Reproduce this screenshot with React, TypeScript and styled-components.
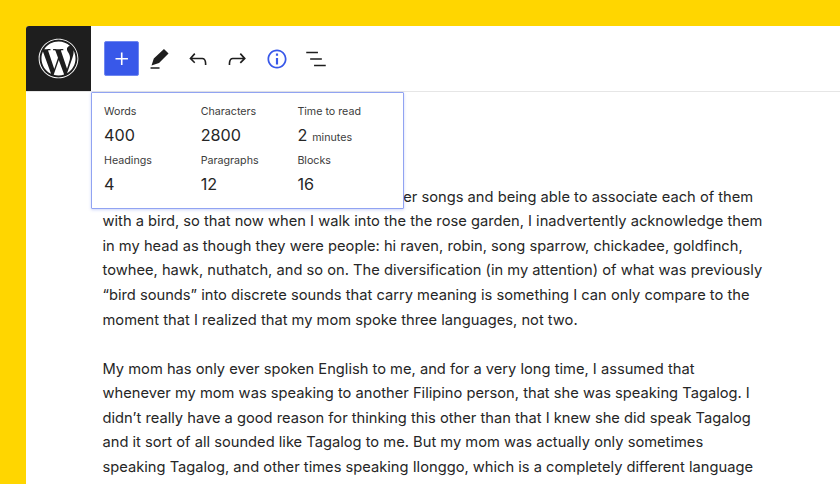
import React from "react";
import styled, { createGlobalStyle } from "styled-components";
import { FaWordpress } from "react-icons/fa";

const Global = createGlobalStyle`
  html, body { margin: 0; padding: 0; }
  body { font-family: Inter, "Noto Sans", sans-serif; background: #ffd600; }
`;
const Page = styled.div`
  width: 840px; height: 484px; box-sizing: border-box; overflow: hidden;
  background: #ffd600; padding: 26px 0 0 26px;
`;
const Editor = styled.div`
  position: relative; height: 458px; background: #fff; border-top-left-radius: 3px; overflow: hidden;
`;
const Toolbar = styled.header`
  display: flex; align-items: center; height: 66px; box-sizing: border-box;
  border-bottom: 1px solid #e6e6e6;
`;
const Logo = styled.div`
  width: 65px; height: 65px; background: #1e1e1e; color: #fff;
  display: flex; align-items: center; justify-content: center; margin-right: 13px;
`;
const AddButton = styled.button`
  width: 35px; height: 35px; padding: 0; border: 1px solid #6f87f0; border-radius: 2px;
  background: #3858e9; color: #fff; display: flex; align-items: center; justify-content: center;
`;
const IconButton = styled.button<{ $active?: boolean }>`
  width: 39.3px; height: 35px; padding: 0; border: 0; background: none;
  color: ${(p) => (p.$active ? "#3858e9" : "#1e1e1e")};
  display: flex; align-items: center; justify-content: center;
`;
const Icon = styled.svg`
  width: 26px; height: 26px; fill: currentColor; display: block;
`;
const Popover = styled.section`
  position: absolute; left: 65px; top: 66px; width: 313px; height: 117px; box-sizing: border-box;
  background: #fff; border: 1px solid #91a3f2; border-radius: 1px;
  box-shadow: 0 1px 3px rgba(56, 88, 233, 0.25);
  padding: 12px 0 0 12px;
  display: grid; grid-template-columns: 96.7px 96.7px 96.7px; grid-auto-rows: 49px;
`;
const Stat = styled.div`
  display: flex; flex-direction: column; color: #1e1e1e;
`;
const Label = styled.div`
  font-size: 10.7px; line-height: 14px; color: #3c3c3c;
`;
const Value = styled.div`
  font-size: 16.2px; line-height: 20px; margin-top: 6.4px; color: #262626;
`;
const Unit = styled.span`
  font-size: 10.7px; margin-left: 5px; color: #3c3c3c;
`;
const Content = styled.main`
  padding: 92.8px 0 0 76.5px; color: #262626; font-size: 14.7px; line-height: 24.55px;
`;
const Paragraph = styled.p`
  margin: 0 0 24.55px; white-space: nowrap;
`;
const Line = styled.span`
  display: block;
`;

const stats: { label: string; value: string; unit?: string }[] = [
  { label: "Words", value: "400" },
  { label: "Characters", value: "2800" },
  { label: "Time to read", value: "2", unit: "minutes" },
  { label: "Headings", value: "4" },
  { label: "Paragraphs", value: "12" },
  { label: "Blocks", value: "16" },
];

export default function App() {
  return (
    <Page>
      <Global />
      <Editor>
        <Toolbar>
          <Logo><FaWordpress size={41} /></Logo>
          <AddButton aria-label="Add">
            <Icon viewBox="0 0 24 24"><path d="M11 12.5V17.5H12.5V12.5H17.5V11H12.5V6H11V11H6V12.5H11Z" /></Icon>
          </AddButton>
          <IconButton aria-label="Edit">
            <Icon viewBox="0 0 24 24"><path d="M5.1 18 7.2 11.5 16.6 2.8 20.8 7 12 15.7ZM4.2 19.6h8.3v1.4H4.2z" /></Icon>
          </IconButton>
          <IconButton aria-label="Undo">
            <Icon viewBox="0 0 24 24"><path d="M18.3 11.7c-.6-.6-1.4-.9-2.3-.9H6.7l2.9-3.3-1.1-1-4.5 5L8.5 16l1-1-2.7-2.7H16c.5 0 .9.2 1.3.5 1 1 1 3.4 1 4.5v.3h1.5v-.2c0-1.5 0-4.3-1.5-5.7z" /></Icon>
          </IconButton>
          <IconButton aria-label="Redo">
            <Icon viewBox="0 0 24 24"><path d="M15.6 6.5l-1.1 1 2.9 3.3H8c-.9 0-1.7.3-2.3.9-1.4 1.5-1.4 4.2-1.4 5.6v.2h1.5v-.3c0-1.1 0-3.5 1-4.5.3-.3.7-.5 1.3-.5h9.2L14.5 15l1.1 1.1 4.6-4.6-4.6-5z" /></Icon>
          </IconButton>
          <IconButton $active aria-label="Details">
            <Icon viewBox="0 0 24 24"><path d="M12 3.2c-4.8 0-8.8 3.9-8.8 8.8 0 4.8 3.9 8.8 8.8 8.8 4.8 0 8.8-3.9 8.8-8.8 0-4.8-4-8.8-8.8-8.8zm0 16c-4 0-7.2-3.3-7.2-7.2C4.8 8 8 4.8 12 4.8s7.2 3.3 7.2 7.2c0 4-3.2 7.2-7.2 7.2zM11 17h2v-6h-2v6zm0-8h2V7h-2v2z" /></Icon>
          </IconButton>
          <IconButton aria-label="List view">
            <Icon viewBox="0 0 24 24"><path d="M13.8 5.2H3v1.5h10.8V5.2zm-3.6 12v1.5H21v-1.5H10.2zm7.2-6H6.6v1.5h10.8v-1.5z" /></Icon>
          </IconButton>
        </Toolbar>
        <Popover>
          {stats.map((s) => (
            <Stat key={s.label}>
              <Label>{s.label}</Label>
              <Value>{s.value}{s.unit && <Unit>{s.unit}</Unit>}</Value>
            </Stat>
          ))}
        </Popover>
        <Content>
          <Paragraph>
            <Line>What I love about birding is hearing their ever songs and being able to associate each of them</Line>
            <Line>with a bird, so that now when I walk into the the rose garden, I inadvertently acknowledge them</Line>
            <Line>in my head as though they were people: hi raven, robin, song sparrow, chickadee, goldfinch,</Line>
            <Line>towhee, hawk, nuthatch, and so on. The diversification (in my attention) of what was previously</Line>
            <Line>“bird sounds” into discrete sounds that carry meaning is something I can only compare to the</Line>
            <Line>moment that I realized that my mom spoke three languages, not two.</Line>
          </Paragraph>
          <Paragraph>
            <Line>My mom has only ever spoken English to me, and for a very long time, I assumed that</Line>
            <Line>whenever my mom was speaking to another Filipino person, that she was speaking Tagalog. I</Line>
            <Line>didn’t really have a good reason for thinking this other than that I knew she did speak Tagalog</Line>
            <Line>and it sort of all sounded like Tagalog to me. But my mom was actually only sometimes</Line>
            <Line>speaking Tagalog, and other times speaking Ilonggo, which is a completely different language</Line>
          </Paragraph>
        </Content>
      </Editor>
    </Page>
  );
}
